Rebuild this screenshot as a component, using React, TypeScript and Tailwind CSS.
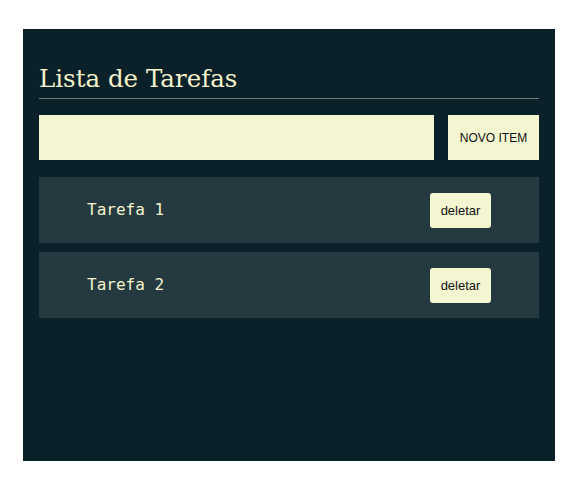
export default function App() {
  const tasks = ['Tarefa 1', 'Tarefa 2']

  return (
    <div className="min-h-screen bg-white pt-[29px]">
      <div className="ml-[23px] w-[532px] h-[432px] bg-[#0a2129] px-4 pt-[35px]">
        <h1
          className="text-[24.5px] leading-[30px] text-[#f4f3cc] pb-[4px] border-b border-[#737d74]"
          style={{ fontFamily: '"DejaVu Serif", "Liberation Serif", serif' }}
        >
          Lista de Tarefas
        </h1>
        <div className="mt-4 flex gap-[14px]">
          <input className="h-[45px] flex-1 bg-[#f4f5d1] outline-none px-2" />
          <button
            className="h-[45px] w-[91px] bg-[#f4f5d1] text-[12px] text-[#111]"
            style={{ fontFamily: '"Liberation Sans", Arial, sans-serif' }}
          >
            NOVO ITEM
          </button>
        </div>
        <div className="mt-[17px] flex flex-col gap-[9px]">
          {tasks.map(t => (
            <div key={t} className="h-[66px] bg-[#243940] flex items-center justify-between pl-12 pr-12">
              <span
                className="text-[16px] text-[#f4f3cc]"
                style={{ fontFamily: '"DejaVu Sans Mono", monospace' }}
              >
                {t}
              </span>
              <button
                className="h-[35px] w-[61px] rounded-[3px] bg-[#f4f5d1] text-[13px] text-[#111] mt-[1px]"
                style={{ fontFamily: '"Liberation Sans", Arial, sans-serif' }}
              >
                deletar
              </button>
            </div>
          ))}
        </div>
      </div>
    </div>
  )
}
